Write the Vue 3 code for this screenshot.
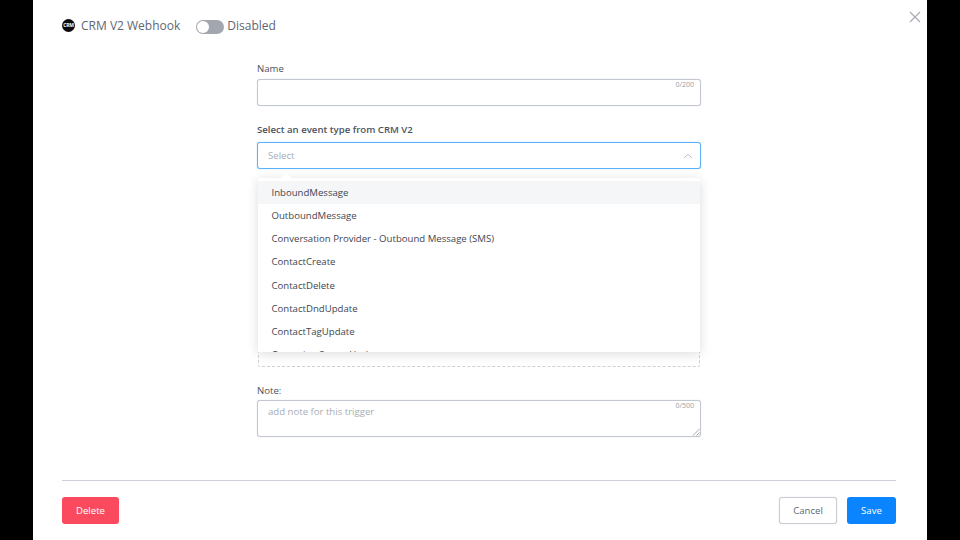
<script setup>
const events = [
  'InboundMessage',
  'OutboundMessage',
  'Conversation Provider - Outbound Message (SMS)',
  'ContactCreate',
  'ContactDelete',
  'ContactDndUpdate',
  'ContactTagUpdate',
  'Campaign Status Update',
]
</script>

<template>
  <div class="page">
    <div class="modal">
      <button class="close" aria-label="Close">
        <svg width="12" height="12" viewBox="0 0 12 12"><path d="M1 1l10 10M11 1L1 11" stroke="#a9adb5" stroke-width="1.3" fill="none" /></svg>
      </button>
      <header class="head">
        <span class="logo">CRM</span>
        <span class="title">CRM V2 Webhook</span>
        <span class="toggle"><span class="knob"></span></span>
        <span class="state">Disabled</span>
      </header>
      <main class="form">
        <label class="label">Name</label>
        <div class="input name">
          <span class="count">0/200</span>
        </div>
        <label class="label strong">Select an event type from CRM V2</label>
        <div class="select-wrap">
          <div class="select">
            <span>Select</span>
            <svg width="10" height="6" viewBox="0 0 10 6"><path d="M1 5.2l4-4 4 4" stroke="#b4b8bf" stroke-width="1" fill="none" /></svg>
          </div>
          <div class="menu">
            <span class="arrow"></span>
            <ul class="list">
              <li v-for="(e, i) in events" :key="e" :class="{ active: i === 0 }">{{ e }}</li>
            </ul>
          </div>
        </div>
        <div class="dashed"></div>
        <label class="label">Note:</label>
        <div class="input note">
          <span class="ph">add note for this trigger</span>
          <span class="count">0/500</span>
          <svg class="grip" width="8" height="8" viewBox="0 0 8 8"><path d="M7.5 1L1 7.5M7.5 4.5L4.5 7.5" stroke="#8b8f96" stroke-width="0.8" fill="none" /></svg>
        </div>
      </main>
      <footer class="foot">
        <button class="btn danger">Delete</button>
        <div class="right">
          <button class="btn ghost">Cancel</button>
          <button class="btn primary">Save</button>
        </div>
      </footer>
    </div>
  </div>
</template>

<style>
html, body { margin: 0; background: #000; }
</style>

<style scoped>
.page {
  width: 960px;
  height: 540px;
  background: #000;
  display: flex;
  justify-content: center;
  overflow: hidden;
  font-family: "Open Sans", "Liberation Sans", sans-serif;
}
.modal {
  position: relative;
  width: 894px;
  height: 540px;
  background: #fff;
  box-sizing: border-box;
  padding: 0 31px 0 29px;
  display: flex;
  flex-direction: column;
}
.close {
  position: absolute;
  top: 11px;
  right: 6px;
  width: 12px;
  height: 12px;
  padding: 0;
  border: 0;
  background: none;
  display: flex;
}
.head {
  height: 51px;
  display: flex;
  align-items: center;
  color: #5f6672;
}
.logo {
  width: 13px;
  height: 13px;
  margin-right: 6px;
  margin-bottom: 1px;
  border-radius: 50%;
  background: #0b0b0d;
  color: #fff;
  font-size: 5px;
  font-weight: 700;
  line-height: 13px;
  text-align: center;
  letter-spacing: -0.3px;
  overflow: hidden;
}
.title {
  font-size: 12px;
  line-height: 18px;
}
.toggle {
  width: 28px;
  height: 14px;
  margin-top: 2px;
  margin-left: 16px;
  margin-right: 3px;
  border-radius: 7px;
  background: #a2a6ae;
  box-sizing: border-box;
  padding: 1px;
}
.knob {
  display: block;
  width: 12px;
  height: 12px;
  border-radius: 50%;
  background: #fff;
}
.state {
  font-size: 12px;
  line-height: 18px;
}
.form {
  width: 444px;
  margin-left: 195px;
  display: flex;
  flex-direction: column;
  padding-top: 10px;
}
.label {
  display: block;
  height: 18px;
  font-size: 9.6px;
  line-height: 15px;
  color: #4b525d;
}
.label.strong {
  height: 20px;
  font-weight: 600;
}
.input {
  position: relative;
  box-sizing: border-box;
  border: 1px solid #c3c7d0;
  border-radius: 3px;
  background: #fff;
  box-shadow: 0 0 1px #c3c7d0;
}
.input.name {
  height: 27px;
  margin-bottom: 16px;
}
.count {
  position: absolute;
  top: 0;
  right: 6px;
  font-size: 7px;
  line-height: 10px;
  color: #9a9ea6;
}
.select-wrap {
  position: relative;
}
.select {
  height: 27px;
  box-sizing: border-box;
  border: 1px solid #5cb2fb;
  border-radius: 3px;
  box-shadow: 0 0 1px #5cb2fb;
  padding: 0 7px 0 10px;
  display: flex;
  align-items: center;
  justify-content: space-between;
  font-size: 9.6px;
  color: #a9adb4;
  background: #fff;
}
.menu {
  position: absolute;
  z-index: 2;
  top: 36px;
  left: 1px;
  right: 1px;
  height: 174px;
  background: #fff;
  border-radius: 2px 2px 0 0;
  box-shadow: 0 2px 12px rgba(0, 0, 0, 0.14);
}
.arrow {
  position: absolute;
  top: -4px;
  left: 24px;
  width: 8px;
  height: 8px;
  background: #fff;
  transform: rotate(45deg);
}
.list {
  position: relative;
  list-style: none;
  margin: 0;
  padding: 2.8px 0 0;
  height: 171.2px;
  overflow: hidden;
}
.list li {
  height: 23.2px;
  line-height: 23px;
  padding: 0 13.5px;
  font-size: 9.6px;
  color: #3f4650;
  white-space: nowrap;
}
.list li.active {
  background: #f5f6f8;
}
.dashed {
  height: 189px;
  margin: 9px 1px 16px;
  box-sizing: border-box;
  border: 1px dashed #cdd0d5;
  border-radius: 2px;
}
.note {
  height: 37px;
  margin-top: -1px;
}
.ph {
  position: absolute;
  left: 10px;
  top: 3px;
  font-size: 9.6px;
  line-height: 15px;
  color: #a9adb4;
}
.grip {
  position: absolute;
  right: 0;
  bottom: 0;
}
.foot {
  margin-top: 43px;
  border-top: 1px solid #cfcdde;
  padding-top: 16px;
  display: flex;
  justify-content: space-between;
}
.right {
  display: flex;
  gap: 10px;
}
.btn {
  height: 27px;
  box-sizing: border-box;
  border-radius: 3px;
  border: 1px solid transparent;
  font-family: inherit;
  font-size: 9.6px;
  padding: 0;
}
.danger {
  width: 57px;
  background: #fb4a5e;
  color: #fff;
}
.ghost {
  width: 58px;
  background: #fff;
  border-color: #c8cbd1;
  box-shadow: 0 0 1px #c8cbd1;
  color: #5f6672;
}
.primary {
  width: 49px;
  background: #0a84ff;
  color: #fff;
}
</style>
